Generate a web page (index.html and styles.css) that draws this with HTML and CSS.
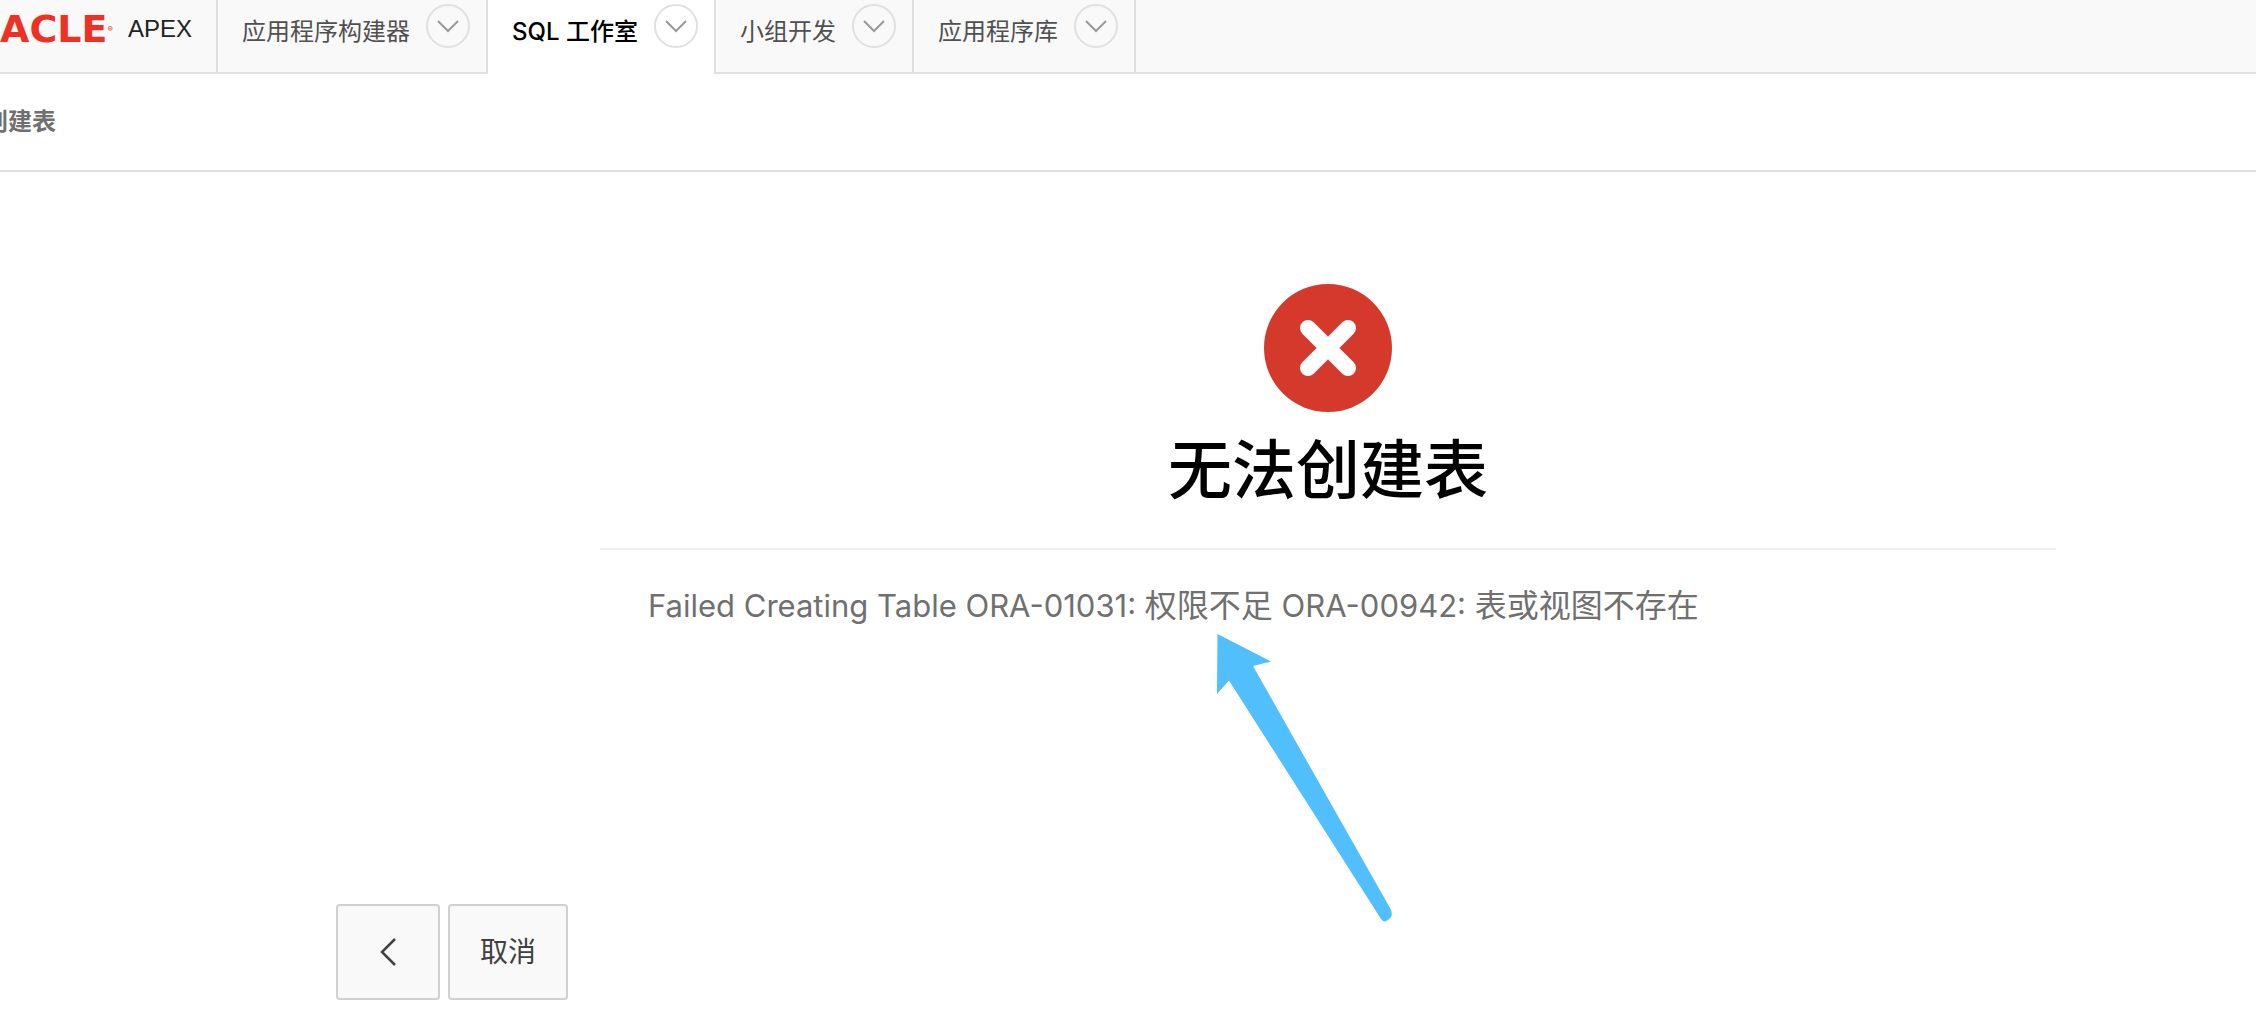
FILE: index.html
```
<!DOCTYPE html>
<html lang="zh-CN">
<head>
<meta charset="utf-8">
<meta name="viewport" content="width=device-width, initial-scale=1">
<title>创建表</title>
<link rel="stylesheet" href="styles.css">
</head>
<body>
<svg class="sprite">
  <symbol id="chevron" viewBox="0 0 24 14"><path d="M2 2 12 12 22 2" fill="none" stroke="currentColor" stroke-width="2"/></symbol>
</svg>
<header class="header">
  <a class="brand" href="#"><span class="brand-mark">ACLE</span><sup class="brand-reg">®</sup><span class="brand-product">APEX</span></a>
  <nav class="tabs">
    <div class="tab"><a class="tab-link" href="#">应用程序构建器</a><button class="tab-menu" type="button" aria-label="应用程序构建器"><svg class="chevron"><use href="#chevron"/></svg></button></div>
    <div class="tab tab-active"><a class="tab-link" href="#" aria-current="page">SQL 工作室</a><button class="tab-menu" type="button" aria-label="SQL 工作室"><svg class="chevron"><use href="#chevron"/></svg></button></div>
    <div class="tab"><a class="tab-link" href="#">小组开发</a><button class="tab-menu" type="button" aria-label="小组开发"><svg class="chevron"><use href="#chevron"/></svg></button></div>
    <div class="tab"><a class="tab-link" href="#">应用程序库</a><button class="tab-menu" type="button" aria-label="应用程序库"><svg class="chevron"><use href="#chevron"/></svg></button></div>
  </nav>
</header>
<div class="breadcrumb"><span class="breadcrumb-item">创建表</span></div>
<main class="wizard">
  <section class="result">
    <div class="result-head">
      <svg class="result-icon" viewBox="0 0 128 128" aria-hidden="true">
        <circle cx="64" cy="64" r="64" fill="#d5392c"/>
        <path d="M44 44 84 84M84 44 44 84" stroke="#fff" stroke-width="16" stroke-linecap="round"/>
      </svg>
      <h1 class="result-title">无法创建表</h1>
    </div>
    <p class="result-message"><span class="latin">Failed Creating Table ORA-01031: </span>权限不足<span class="latin"> ORA-00942: </span>表或视图不存在</p>
    <svg class="pointer" viewBox="0 0 176 288" aria-hidden="true">
      <path d="M1.500 0 55 27.500 37 32 174 274Q177 279 175 283 172 287 169 287.500 167 287.500 165 285L13 46.500 1 60Z" fill="#50bffb"/>
    </svg>
  </section>
  <div class="actions">
    <button class="button button-back" type="button" aria-label="上一步"><svg class="back-icon" viewBox="0 0 18 28"><path d="M16 1 3 14 16 27" fill="none" stroke="currentColor" stroke-width="2.500"/></svg></button>
    <button class="button" type="button">取消</button>
  </div>
</main>
</body>
</html>
```
FILE: styles.css
```
* { box-sizing: border-box; }

body {
  margin: 0;
  background: #fff;
  color: #000;
  font-family: Inter, "Noto Sans CJK SC", sans-serif;
  font-size: 24px;
  line-height: 32px;
}

a { color: inherit; text-decoration: none; }
button { font: inherit; color: inherit; cursor: pointer; }
.sprite { display: none; }

.header {
  display: flex;
  height: 74px;
  background: linear-gradient(#e0e0e0, #e0e0e0) bottom / 100% 2px no-repeat #f9f9f9;
}

.brand {
  display: flex;
  width: 218px;
  height: 58px;
  align-items: center;
}
.brand-mark {
  color: #ef3124;
  font-family: "DejaVu Sans", sans-serif;
  font-size: 38px;
  font-weight: 700;
}
.brand-reg {
  flex: 1;
  color: #ef3124;
  font-size: 8px;
}
.brand-product {
  width: 90px;
  color: #222;
  font-family: "Liberation Sans", sans-serif;
}

.tabs {
  display: flex;
  border-left: 2px solid #e0e0e0;
  margin-left: -2px;
}
.tab {
  display: flex;
  gap: 16px;
  padding: 4px 16px 0 24px;
  border-right: 2px solid #e0e0e0;
  color: #505050;
}
.tab-active {
  background: #fff;
  color: #000;
  font-weight: 500;
}
.tab-link { padding-top: 12px; white-space: nowrap; }
.tab-menu {
  display: flex;
  width: 44px;
  height: 44px;
  padding: 0;
  align-items: center;
  justify-content: center;
  border: 2px solid #e0e0e0;
  border-radius: 50%;
  background: none;
  color: #999;
}
.chevron { width: 24px; height: 14px; }

.breadcrumb {
  padding: 32px 0;
  border-bottom: 2px solid #e0e0e0;
  overflow: hidden;
}
.breadcrumb-item {
  margin-left: -16px;
  color: #707070;
  font-weight: 700;
}

.wizard { padding: 112px 200px 16px 336px; }
.result {
  position: relative;
  min-height: 620px;
  margin-left: 264px;
}
.result-head {
  display: flex;
  flex-direction: column;
  align-items: center;
  padding-bottom: 30px;
  border-bottom: 2px solid #f0f0f0;
}
.result-icon { width: 128px; height: 128px; }
.result-title {
  margin: 10px 0 0;
  font-size: 64px;
  font-weight: 500;
  line-height: 96px;
}
.result-message {
  margin: 0;
  padding: 32px 48px;
  color: #707070;
  font-size: 32px;
  line-height: 48px;
}
.latin { font-size: 31px; }
/* Callout arrow lying over the page, aimed at the message */
.pointer {
  position: absolute;
  top: 350px;
  left: 616px;
  width: 176px;
  height: 288px;
}

.actions { display: flex; gap: 8px; }
.button {
  display: flex;
  height: 96px;
  padding: 0 30px;
  align-items: center;
  justify-content: center;
  border: 2px solid #d0d0d0;
  border-radius: 4px;
  background: #f9f9f9;
  color: #404040;
  font-size: 28px;
}
.button-back { width: 104px; }
.back-icon { width: 18px; height: 28px; }
```
